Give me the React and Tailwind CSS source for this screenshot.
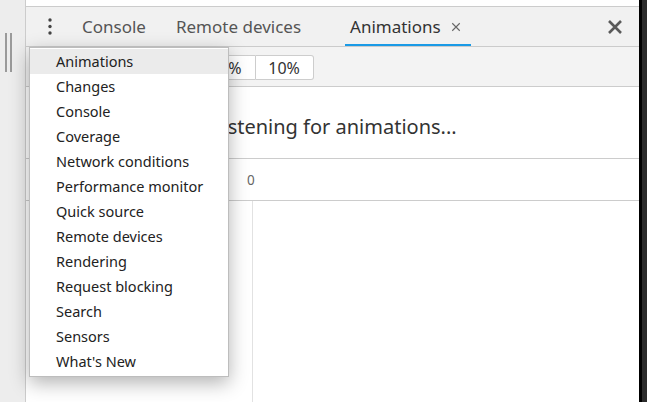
import React from 'react';

const font = { fontFamily: '"Noto Sans", "Open Sans", sans-serif' };

const items = [
    'Animations',
    'Changes',
    'Console',
    'Coverage',
    'Network conditions',
    'Performance monitor',
    'Quick source',
    'Remote devices',
    'Rendering',
    'Request blocking',
    'Search',
    'Sensors',
    "What's New",
];

const Kebab = () => (
    <svg width="6" height="20" viewBox="0 0 6 20" className="text-[#444]">
        <circle cx="3" cy="3" r="1.7" fill="currentColor" />
        <circle cx="3" cy="9.5" r="1.7" fill="currentColor" />
        <circle cx="3" cy="16" r="1.7" fill="currentColor" />
    </svg>
);

const Cross = ({ size, stroke, className }) => (
    <svg width={size} height={size} viewBox="0 0 16 16" className={className}>
        <path d="M2 2 L14 14 M14 2 L2 14" stroke="currentColor" strokeWidth={stroke} fill="none" />
    </svg>
);

const App = () => {
    return (
        <div className="relative w-[647px] h-[402px] overflow-hidden flex bg-white text-[#333]" style={font}>
            {/* left splitter strip */}
            <div className="w-[26px] h-full bg-[#ededed] border-r border-[#cccccc] flex flex-col">
                <div className="mt-[33px] ml-[5px] flex gap-[3px]">
                    <div className="w-[2px] h-[39px] bg-[#9a9a9a]" />
                    <div className="w-[2px] h-[39px] bg-[#9a9a9a]" />
                </div>
            </div>

            {/* main panel */}
            <div className="w-[613px] h-full flex flex-col">
                <div className="h-[7px] bg-white border-b border-[#cccccc]" />

                {/* tab bar */}
                <div className="h-[40px] bg-[#f1f1f1] border-b border-[#cbcbcb] flex items-stretch">
                    <div className="pl-[21px] flex items-center">
                        <Kebab />
                    </div>
                    <div className="flex items-center ml-[29px] text-[17px] text-[#555]">Console</div>
                    <div className="flex items-center ml-[30px] text-[17px] text-[#555]">Remote devices</div>
                    <div className="relative flex items-center ml-[44px] pl-[5px] pr-[10px] text-[17px] text-[#333]">
                        <span>Animations</span>
                        <Cross size={10} stroke={1.8} className="ml-[10px] text-[#666]" />
                        <div className="absolute left-0 right-0 bottom-0 h-[2px] bg-[#1a9ae6]" />
                    </div>
                    <div className="flex-1" />
                    <div className="flex items-center pr-[16px]">
                        <Cross size={16} stroke={2.6} className="text-[#5a5a5a]" />
                    </div>
                </div>

                {/* toolbar */}
                <div className="h-[40px] bg-[#f3f3f3] border-b border-[#cccccc] flex items-start pt-[8px]">
                    <div className="ml-[175px] flex">
                        <div className="h-[25px] pl-[8px] pr-[13px] flex items-center bg-white border border-[#cdcdcd] rounded-l-[3px] text-[16px] text-[#333]">25%</div>
                        <div className="h-[25px] w-[58px] flex items-center justify-center bg-white border border-l-0 border-[#cdcdcd] rounded-r-[3px] text-[16px] text-[#333]">10%</div>
                    </div>
                </div>

                {/* message */}
                <div className="h-[72px] bg-white border-b border-[#cccccc] flex items-center pl-[186px] pt-[8px] text-[20px] text-[#333]">
                    Listening for animations...
                </div>

                {/* timeline header */}
                <div className="h-[42px] bg-white border-b border-[#cccccc] flex items-center pl-[221px] pt-[2px] text-[13.5px] text-[#666]">
                    0
                </div>

                {/* timeline grid */}
                <div className="flex-1 bg-white flex">
                    <div className="ml-[226px] w-[1px] h-full bg-[#e2e2e2]" />
                </div>
            </div>

            {/* right dark edge */}
            <div className="w-[3px] h-full bg-black" />
            <div className="w-[5px] h-full bg-[#2b2b2b]" />

            {/* dropdown menu */}
            <div className="absolute left-[29px] top-[47px] w-[200px] bg-white border border-[#bdbdbd] pt-[1px] pb-[2px] shadow-[0_6px_18px_rgba(0,0,0,0.3)]">
                {items.map((item, i) => (
                    <div
                        key={item}
                        className={`h-[25px] flex items-center pl-[26px] text-[14.5px] text-[#222] ${i === 0 ? 'bg-[#ebebeb]' : ''}`}
                    >
                        {item}
                    </div>
                ))}
            </div>
        </div>
    );
};

export default App;
